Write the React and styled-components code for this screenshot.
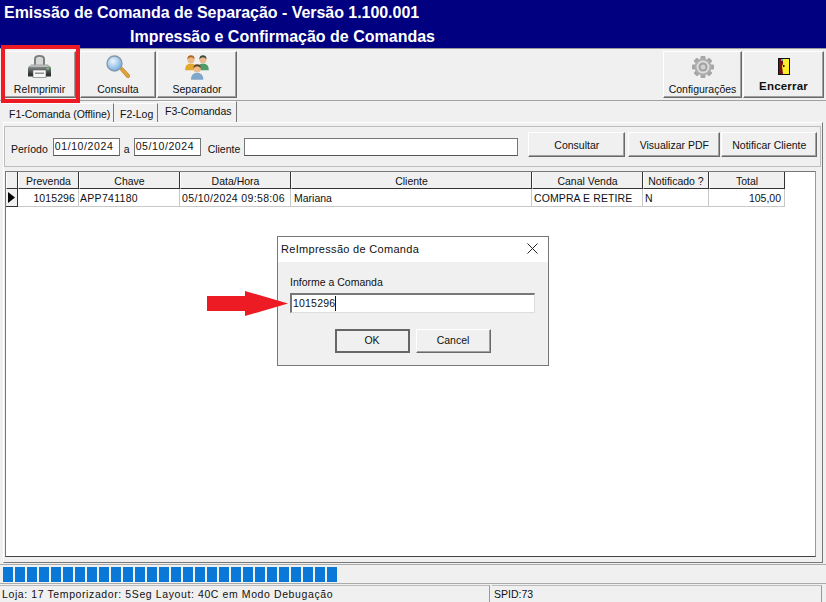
import React from "react";
import styled, { createGlobalStyle } from "styled-components";

const Global = createGlobalStyle`
  html, body { margin: 0; padding: 0; background: #f0f0f0; }
  * { box-sizing: border-box; }
  body { font-family: "Liberation Sans", Arial, sans-serif; font-size: 11px; color: #111; }
`;

const bevel = `
  border-top: 1px solid #fff;
  border-left: 1px solid #fff;
  border-right: 1px solid #696969;
  border-bottom: 1px solid #696969;
  box-shadow: inset -1px -1px 0 #a0a0a0;
`;

const Win = styled.div`
  position: relative;
  width: 826px;
  height: 602px;
  overflow: hidden;
  background: #f0f0f0;
`;

const TitleBar = styled.header`
  height: 49px;
  background: #000080;
  color: #fff;
  font-weight: bold;
  padding-top: 3px;
  border-bottom: 1px solid #9a9a9a;
`;
const Title = styled.div`
  font-size: 16px;
  line-height: 19px;
  letter-spacing: -0.04px;
  padding-left: 4px;
  margin-bottom: 5px;
`;
const SubTitle = styled(Title)`
  letter-spacing: 0;
  padding-left: 130px;
  margin-bottom: 0;
`;

const Toolbar = styled.div`
  display: flex;
  height: 52px;
  padding: 2px 2px 0 3px;
  gap: 1px;
  border-bottom: 1px solid #a0a0a0;
`;
const Spacer = styled.div`flex: 1;`;
const ToolButton = styled.button`
  ${bevel}
  width: ${(p) => p.$w}px;
  height: 47px;
  margin-right: ${(p) => p.$mr || 0}px;
  background: #f0f0f0;
  padding: 0;
  display: flex;
  flex-direction: column;
  align-items: center;
  font: ${(p) => (p.$bold ? "bold 11.500px" : "10.500px")} "Liberation Sans", Arial, sans-serif;
  letter-spacing: ${(p) => (p.$bold ? "0.2px" : "0")};
  color: #111;
`;
const ToolIcon = styled.div`
  height: ${(p) => p.$h || 31}px;
  padding-top: ${(p) => p.$top || 3}px;
  display: flex;
  align-items: flex-start;
  justify-content: center;
`;

const Tabs = styled.div`
  display: flex;
  height: 21px;
  padding: 0 0 0 3px;
`;
const Tab = styled.div`
  height: ${(p) => (p.$active ? 21 : 19)}px;
  margin-top: ${(p) => (p.$active ? 0 : 2)}px;
  padding: ${(p) => (p.$active ? "2px 0 0 7px" : "3px 0 0 6px")};
  border-right: 1px solid #777;
  border-top: 1px solid #fff;
  font-size: 10.5px;
  line-height: 15px;
  white-space: nowrap;
  width: ${(p) => p.$w}px;
`;

const Page = styled.section`
  margin: 0 3px;
  height: 441px;
  border-left: 1px solid #fff;
  border-top: 1px solid #fff;
  border-right: 1px solid #777;
  border-bottom: 1px solid #777;
  padding-top: 3px;
`;
const FilterBar = styled.div`
  height: 41px;
  width: 817px;
  border: 1px solid #bdbdbd;
  display: flex;
  align-items: flex-start;
  padding: 5px 0 0 6px;
`;
const FieldLabel = styled.label`
  font-size: 10.5px;
  line-height: 14px;
  padding-top: 10px;
  margin: ${(p) => p.$m || "0"};
`;
const TextBox = styled.div`
  width: ${(p) => p.$w}px;
  height: 18px;
  background: #fff;
  border: 1px solid #777;
  border-bottom-color: #555;
  font-size: 10.5px;
  letter-spacing: 0.6px;
  line-height: 14px;
  padding-left: 1px;
  margin-top: 6px;
`;
const FilterButton = styled.button`
  ${bevel}
  width: ${(p) => p.$w}px;
  height: 25px;
  background: #f0f0f0;
  font: 10.5px "Liberation Sans", Arial, sans-serif;
  color: #111;
  padding: 0;
  margin-left: ${(p) => p.$ml || 1}px;
`;

const Grid = styled.div`
  margin: 4px 0 0 1px;
  width: 811px;
  height: 386px;
  background: #fff;
  border: 1px solid #777;
  border-right-color: #999;
  border-bottom-color: #444;
`;
const Row = styled.div`
  display: flex;
  height: ${(p) => p.$h}px;
`;
const HeadCell = styled.div`
  width: ${(p) => p.$w}px;
  background: #f0f0f0;
  border-right: 1px solid #333;
  border-bottom: 1px solid #333;
  border-left: 1px solid #fff;
  text-align: center;
  font-size: 10.5px;
  line-height: 18px;
  white-space: nowrap;
  overflow: hidden;
`;
const Cell = styled.div`
  width: ${(p) => p.$w}px;
  border-right: 1px solid #c8c8c8;
  border-bottom: 1px solid #c8c8c8;
  text-align: ${(p) => (p.$right ? "right" : "left")};
  padding: 0 ${(p) => (p.$right ? 3 : 1)}px 0 ${(p) => p.$pl || 1}px;
  font-size: 10.5px;
  letter-spacing: ${(p) => p.$ls || 0}px;
  line-height: 18px;
  white-space: nowrap;
  overflow: hidden;
`;
const Indicator = styled.div`
  width: 12px;
  background: #f0f0f0;
  border-right: 1px solid #333;
  border-bottom: 1px solid #333;
  display: flex;
  align-items: center;
  justify-content: center;
`;

const ProgressRow = styled.div`
  margin-top: 1px;
  height: 20px;
  border-top: 1px solid #aaa;
  border-bottom: 1px solid #aaa;
  padding: 2px 0 0 3px;
  display: flex;
  gap: 2px;
`;
const Block = styled.div`
  width: 10px;
  height: 15px;
  background: #0a78d7;
`;
const StatusBar = styled.footer`
  display: flex;
  height: 17px;
  margin-top: 1px;
  font-size: 10.5px;
  line-height: 17px;
`;
const StatusPane = styled.div`
  width: ${(p) => p.$w}px;
  padding-left: 2px;
  border-right: 1px solid #999;
  border-top: 1px solid #bbb;
  margin-right: 2px;
  letter-spacing: ${(p) => p.$ls || 0}px;
  white-space: nowrap;
`;

const Mark = styled.div`
  position: absolute;
  left: 1px;
  top: 45px;
  width: 79px;
  height: 58px;
  border: 4px solid #ed1c24;
`;
const Arrow = styled.svg`
  position: absolute;
  left: 207px;
  top: 291px;
`;

const Dialog = styled.div`
  position: absolute;
  left: 277px;
  top: 236px;
  width: 272px;
  height: 130px;
  background: #f0f0f0;
  border: 1px solid #777;
`;
const DialogHead = styled.div`
  height: 25px;
  padding: 0 10px 2px 3px;
  background: #fff;
  display: flex;
  align-items: center;
  justify-content: space-between;
  font-size: 11px;
  letter-spacing: 0.3px;
`;
const DialogBody = styled.div`
  padding: 13px 12px 0 12px;
`;
const DialogLabel = styled.div`
  font-size: 10.5px;
  line-height: 15px;
  margin-bottom: 3px;
`;
const DialogInput = styled.div`
  width: 245px;
  height: 20px;
  background: #fff;
  border-top: 2px solid #777;
  border-left: 2px solid #777;
  border-right: 1px solid #ddd;
  border-bottom: 1px solid #ddd;
  font-size: 10.5px;
  letter-spacing: 0.2px;
  line-height: 17px;
  padding-left: 1px;
  display: flex;
`;
const Caret = styled.span`
  width: 1px;
  height: 15px;
  margin-top: 1px;
  background: #111;
`;
const DialogButtons = styled.div`
  display: flex;
  justify-content: center;
  gap: 6px;
  margin-top: 16px;
  padding-right: 1px;
`;
const DialogButton = styled.button`
  width: 75px;
  height: 24px;
  background: #f0f0f0;
  font: 10.5px "Liberation Sans", Arial, sans-serif;
  color: #111;
  padding: 0 0 2px;
  ${(p) => (p.$default ? "border: 2px solid #666;" : bevel)}
`;

const PrinterIcon = () => (
  <svg width="23" height="23" viewBox="0 0 23 23">
    <defs>
      <linearGradient id="pb" x1="0" y1="0" x2="0" y2="1">
        <stop offset="0" stopColor="#a2a6a6" />
        <stop offset="1" stopColor="#2f3535" />
      </linearGradient>
    </defs>
    <path d="M6 11V4q0-4 5.500-4T17 4v7h-2V4.500Q15 2 11.500 2T8 4.500V11z" fill="#7b7f7f" />
    <rect x="8" y="3" width="7" height="8" fill="#d6d6d6" />
    <path d="M3 9.500h17l3 3V19H0v-6.500z" fill="url(#pb)" />
    <rect x="2" y="10.500" width="19" height="1.200" fill="#cfd1d1" />
    <rect x="5" y="15" width="13" height="7.500" fill="#f6f6f6" stroke="#6a6a6a" strokeWidth="0.6" />
    <rect x="7" y="17.500" width="9" height="1.500" fill="#8e9292" />
    <rect x="18.500" y="13" width="2.500" height="1.500" fill="#74d068" />
    <rect x="0" y="19" width="5" height="2.500" fill="#2e3333" />
    <rect x="18" y="19" width="5" height="2.500" fill="#2e3333" />
  </svg>
);
const SearchGlass = () => (
  <svg width="24" height="23" viewBox="0 0 24 23">
    <defs>
      <radialGradient id="gl" cx="0.4" cy="0.35" r="0.7">
        <stop offset="0" stopColor="#eef6fc" />
        <stop offset="1" stopColor="#6aa7dc" />
      </radialGradient>
    </defs>
    <path d="M14 14.500l2.500-2 7 7.500q1 1.500-.5 2.500t-2.500-.500z" fill="#e0a33a" stroke="#a86e16" strokeWidth="0.6" />
    <circle cx="8.500" cy="8.500" r="7.500" fill="url(#gl)" stroke="#8798ab" strokeWidth="1.400" />
  </svg>
);
const Person = ({ x, y, hair, shirt, scale = 1 }) => (
  <g transform={`translate(${x} ${y}) scale(${scale})`}>
    <path d="M0 18q0-8 7-8t7 8z" fill={shirt} />
    <circle cx="7" cy="5.500" r="4.200" fill="#edbb8b" />
    <path d="M2.800 5q0-4.600 4.200-4.600T11.200 5q-2-2.500-4.200-2.500T2.800 5z" fill={hair} />
  </g>
);
const PeopleIcon = () => (
  <svg width="24" height="25" viewBox="0 0 24 25">
    <Person x={0} y={0} hair="#b5651d" shirt="#e3a72c" scale={0.85} />
    <Person x={12} y={0} hair="#3f4a3c" shirt="#4f9c6b" scale={0.85} />
    <Person x={6} y={9} hair="#5b4426" shirt="#7fa7c9" scale={0.88} />
  </svg>
);
const GearIcon = () => (
  <svg width="22" height="22" viewBox="0 0 22 22">
    <g fill="#a5a5a5">
      {[0, 45, 90, 135, 180, 225, 270, 315].map((a) => (
        <rect key={a} x="8.500" y="0" width="5" height="5" rx="1" transform={`rotate(${a} 11 11)`} />
      ))}
    </g>
    <circle cx="11" cy="11" r="8.500" fill="#aeaeae" />
    <circle cx="11" cy="11" r="6.500" fill="#dcdcdc" />
    <circle cx="11" cy="11" r="4.500" fill="#a0a0a0" />
    <circle cx="11" cy="11" r="2.500" fill="#d0d0d0" />
  </svg>
);
const DoorIcon = () => (
  <svg width="12" height="17" viewBox="0 0 12 17">
    <rect x="0" y="0" width="12" height="17" fill="#111" />
    <rect x="1" y="1" width="10" height="15" fill="#ffef2a" />
    <path d="M1 1h4v5l-1 2 1 8H1z" fill="#7a1111" />
    <rect x="3" y="1" width="2" height="2" fill="#5f9ea0" />
    <rect x="5" y="7" width="1.500" height="2" fill="#111" />
  </svg>
);

const columns = [
  { t: "Prevenda", w: 61, v: "1015296", right: true, ls: 0.1 },
  { t: "Chave", w: 101, v: "APP741180", ls: 0.3 },
  { t: "Data/Hora", w: 111, v: "05/10/2024 09:58:06", ls: 0.35, pl: 2 },
  { t: "Cliente", w: 241, v: "Mariana", pl: 3 },
  { t: "Canal Venda", w: 111, v: "COMPRA E RETIRE", ls: 0.1, pl: 2 },
  { t: "Notificado ?", w: 66, v: "N", pl: 2 },
  { t: "Total", w: 76, v: "105,00", right: true },
];

export default function App() {
  return (
    <Win>
      <Global />
      <TitleBar>
        <Title>Emissão de Comanda de Separação - Versão 1.100.001</Title>
        <SubTitle>Impressão e Confirmação de Comandas</SubTitle>
      </TitleBar>
      <Toolbar>
        <ToolButton $w={73} $mr={3}>
          <ToolIcon><PrinterIcon /></ToolIcon>
          ReImprimir
        </ToolButton>
        <ToolButton $w={76}>
          <ToolIcon><SearchGlass /></ToolIcon>
          Consulta
        </ToolButton>
        <ToolButton $w={80}>
          <ToolIcon><PeopleIcon /></ToolIcon>
          Separador
        </ToolButton>
        <Spacer />
        <ToolButton $w={79}>
          <ToolIcon $top={4}><GearIcon /></ToolIcon>
          Configurações
        </ToolButton>
        <ToolButton $w={81} $bold>
          <ToolIcon $h={28} $top={6}><DoorIcon /></ToolIcon>
          Encerrar
        </ToolButton>
      </Toolbar>
      <Tabs>
        <Tab $w={111}>F1-Comanda (Offline)</Tab>
        <Tab $w={44}>F2-Log</Tab>
        <Tab $active $w={79}>F3-Comandas</Tab>
      </Tabs>
      <Page>
        <FilterBar>
          <FieldLabel $m="0 5px 0 0">Período</FieldLabel>
          <TextBox $w={67}>01/10/2024</TextBox>
          <FieldLabel $m="0 4px 0 4px">a</FieldLabel>
          <TextBox $w={67}>05/10/2024</TextBox>
          <FieldLabel $m="0 4px 0 7px">Cliente</FieldLabel>
          <TextBox $w={274} />
          <FilterButton $w={97} $ml={10}>Consultar</FilterButton>
          <FilterButton $w={92} $ml={3}>Visualizar PDF</FilterButton>
          <FilterButton $w={96}>Notificar Cliente</FilterButton>
        </FilterBar>
        <Grid>
          <Row $h={17}>
            <HeadCell $w={12} />
            {columns.map((c) => (
              <HeadCell key={c.t} $w={c.w}>{c.t}</HeadCell>
            ))}
          </Row>
          <Row $h={18}>
            <Indicator>
              <svg width="7" height="11" viewBox="0 0 7 11"><path d="M0 0l7 5.500L0 11z" fill="#000" /></svg>
            </Indicator>
            {columns.map((c) => (
              <Cell key={c.t} $w={c.w} $right={c.right} $ls={c.ls} $pl={c.pl}>{c.v}</Cell>
            ))}
          </Row>
        </Grid>
      </Page>
      <ProgressRow>
        {Array.from({ length: 28 }).map((_, i) => (
          <Block key={i} />
        ))}
      </ProgressRow>
      <StatusBar>
        <StatusPane $w={490} $ls={0.6}>Loja: 17 Temporizador: 5Seg Layout: 40C em Modo Debugação</StatusPane>
        <StatusPane $w={330}>SPID:73</StatusPane>
      </StatusBar>

      <Mark />
      <Dialog>
        <DialogHead>
          ReImpressão de Comanda
          <svg width="11" height="11" viewBox="0 0 11 11">
            <path d="M0.500 0.500l10 10M10.500 0.500l-10 10" stroke="#222" strokeWidth="1" fill="none" />
          </svg>
        </DialogHead>
        <DialogBody>
          <DialogLabel>Informe a Comanda</DialogLabel>
          <DialogInput>1015296<Caret /></DialogInput>
          <DialogButtons>
            <DialogButton $default>OK</DialogButton>
            <DialogButton>Cancel</DialogButton>
          </DialogButtons>
        </DialogBody>
      </Dialog>
      <Arrow width="81" height="25" viewBox="0 0 81 25">
        <path d="M0 5H38V0L81 12.500 38 25V20H0z" fill="#ed1c24" />
      </Arrow>
    </Win>
  );
}
